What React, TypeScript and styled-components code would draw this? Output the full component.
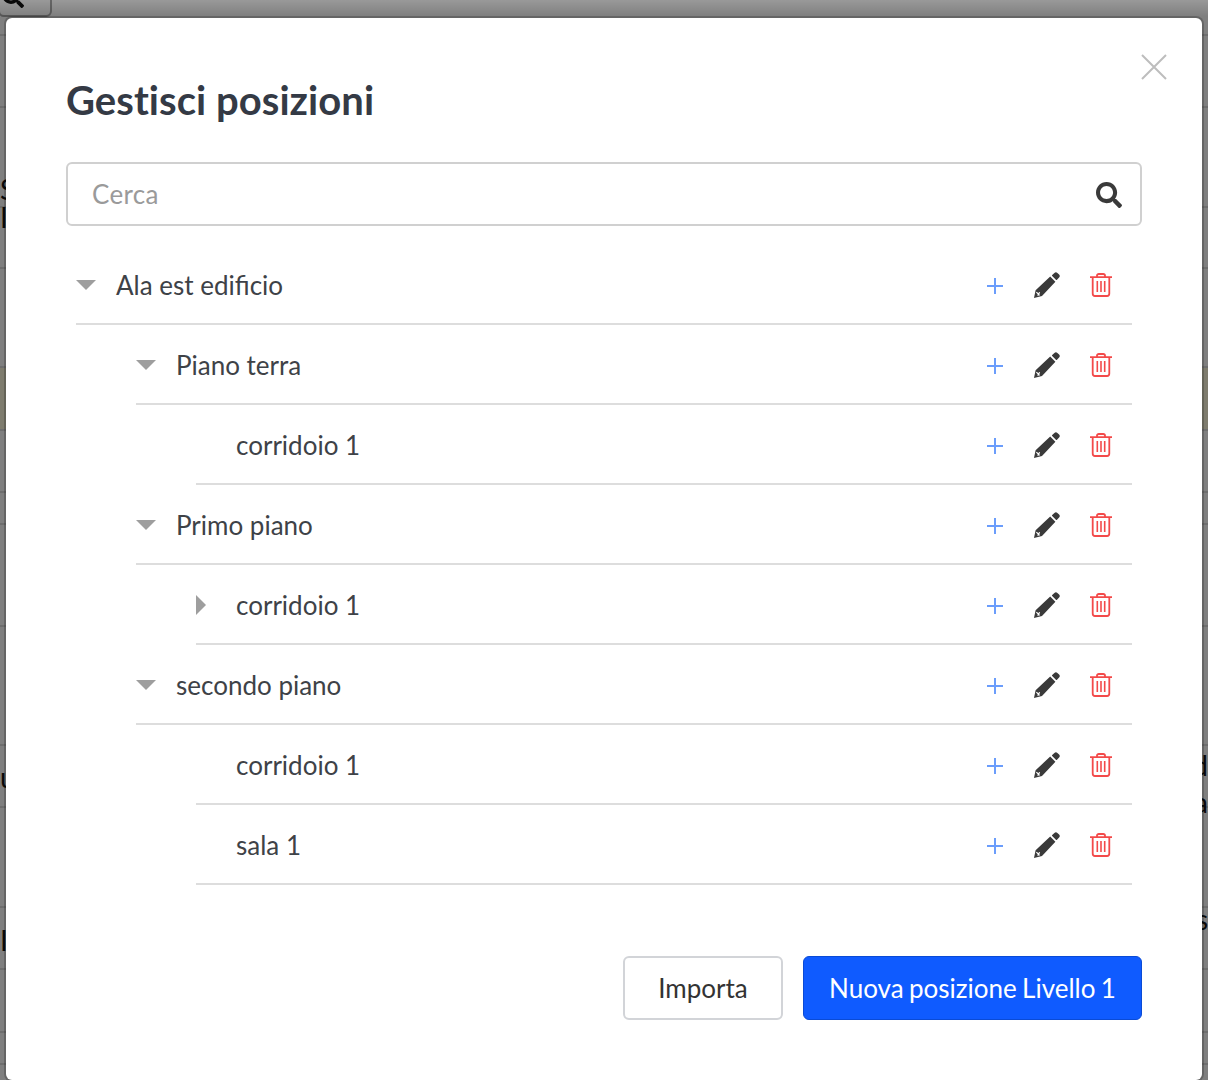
import styled, {createGlobalStyle} from 'styled-components';
import {FaSearch} from 'react-icons/fa';

const GlobalStyle = createGlobalStyle`
  html, body {
    margin: 0;
    height: 100%;
    overflow: hidden;
    font-family: Lato, "Liberation Sans", sans-serif;
  }
  * { box-sizing: border-box; }
`;

type TreeItem = {label: string; level: number; arrow?: 'down' | 'right'};

const items: TreeItem[] = [
  {label: 'Ala est edificio', level: 0, arrow: 'down'},
  {label: 'Piano terra', level: 1, arrow: 'down'},
  {label: 'corridoio 1', level: 2},
  {label: 'Primo piano', level: 1, arrow: 'down'},
  {label: 'corridoio 1', level: 2, arrow: 'right'},
  {label: 'secondo piano', level: 1, arrow: 'down'},
  {label: 'corridoio 1', level: 2},
  {label: 'sala 1', level: 2},
];

// the page that shows at the edges of the modal
const pageRows = [
  {height: 20},
  {height: 72},
  {height: 100, left: 'S', leftTop: 71},
  {height: 61, left: 'I', leftTop: -1},
  {height: 99},
  {height: 63, tint: true},
  {height: 62},
  {height: 32},
  {height: 102},
  {height: 119},
  {height: 62, left: 'u', leftTop: 21, right: 'd', rightTop: 9},
  {height: 100, right: 'a', rightTop: -16},
  {height: 62, left: 'I', leftTop: 22, right: 's', rightTop: 1},
  {height: 63},
  {height: 32},
  {height: 40},
];

const PencilIcon = () => (
  <svg width="26" height="26" viewBox="0 0 26 26">
    <path
      fill="#3a3a3a"
      d="M18.2 3 20.4.9a2.2 2.2 0 0 1 3 0l1.7 1.7a2.2 2.2 0 0 1 0 3L23 7.8a.8.8 0 0 1-1.1 0L18.2 4.1a.8.8 0 0 1 0-1.1zM16.2 4.6l5.2 5.2L8 24 0 26l1.6-7.8z"
    />
    <path fill="none" stroke="#fff" strokeWidth="1.2" d="M2.4 20.2 5.6 23.4M5.6 20.2 3.7 23.6" />
  </svg>
);

const TrashIcon = () => (
  <svg width="22" height="24" viewBox="0 0 22 24" fill="none" stroke="#f34a4a">
    <path strokeWidth="1.8" d="M0 4.2H22M7 4V2.6C7 1.5 7.8 1 8.8 1h4.4c1 0 1.8.5 1.8 1.6V4" />
    <path strokeWidth="1.8" d="M2.7 4.2V20.5C2.7 22 3.6 23 5 23H17c1.4 0 2.3-1 2.3-2.5V4.2" />
    <path strokeWidth="1.6" d="M7.3 8V19M11 8V19M14.7 8V19" />
  </svg>
);

const PlusSvg = styled.svg`
  margin: 2px 1px 0 0;
`;

const PlusIcon = () => (
  <PlusSvg width="16" height="16" viewBox="0 0 16 16" stroke="#6b9dfb" strokeWidth="2">
    <path d="M8 0V16M0 8H16" />
  </PlusSvg>
);

const CloseIcon = () => (
  <svg width="26" height="26" viewBox="0 0 26 26" stroke="#bdbdbd" strokeWidth="2">
    <path d="M1 1 25 25M25 1 1 25" />
  </svg>
);

const App = () => (
  <>
    <GlobalStyle />
    <PageBehind>
      <PageToolbar>
        <PageSearchButton>
          <FaSearch />
        </PageSearchButton>
      </PageToolbar>
      {pageRows.map((row, i) => (
        <PageRow key={i} $height={row.height} $tint={row.tint}>
          <PageText $top={row.leftTop ?? 0}>{row.left}</PageText>
          <PageText $top={row.rightTop ?? 0}>{row.right}</PageText>
        </PageRow>
      ))}
    </PageBehind>
    <Overlay>
      <Modal>
        <CloseButton>
          <CloseIcon />
        </CloseButton>
        <Title>Gestisci posizioni</Title>
        <SearchBox>
          <SearchInput placeholder="Cerca" />
          <SearchIcon />
        </SearchBox>
        <Tree>
          {items.map((item, i) => (
            <Row key={i} $level={item.level}>
              <Arrow>
                {item.arrow === 'down' && <ArrowDown />}
                {item.arrow === 'right' && <ArrowRight />}
              </Arrow>
              <Label>{item.label}</Label>
              <Actions>
                <PlusIcon />
                <PencilIcon />
                <TrashIcon />
              </Actions>
            </Row>
          ))}
        </Tree>
        <Footer>
          <SecondaryButton>Importa</SecondaryButton>
          <PrimaryButton>Nuova posizione Livello 1</PrimaryButton>
        </Footer>
      </Modal>
    </Overlay>
  </>
);

const PageBehind = styled.div`
  position: fixed;
  inset: 0;
  background: #fff;
  overflow: hidden;
`;
const PageToolbar = styled.div`
  height: 16px;
  background: #fff;
`;
const PageSearchButton = styled.div`
  position: relative;
  width: 54px;
  height: 17px;
  margin-left: -2px;
  overflow: hidden;
  border: 2px solid #aaa;
  border-top: 0;
  border-radius: 0 0 6px 6px;
  color: #111;
  svg {
    position: absolute;
    top: -14px;
    left: 2px;
    width: 22px;
    height: 22px;
  }
`;
const PageRow = styled.div<{$height: number; $tint?: boolean}>`
  height: ${props => props.$height}px;
  display: flex;
  justify-content: space-between;
  border-bottom: 2px solid #ddd;
  background: ${props => (props.$tint ? '#fdf8dc' : 'transparent')};
`;
const PageText = styled.span<{$top: number}>`
  margin-top: ${props => props.$top}px;
  height: 20px;
  font-size: 28px;
  line-height: 20px;
  color: #111;
`;
const Overlay = styled.div`
  position: fixed;
  inset: 0;
  padding: 18px 6px 0;
  background: linear-gradient(rgba(0, 0, 0, 0.4), rgba(0, 0, 0, 0.5) 16px);
`;
const Modal = styled.div`
  position: relative;
  height: 1062px;
  padding: 59px 60px 0;
  background: #fff;
  border-radius: 6px;
  box-shadow: 0 0 0 2px rgba(0, 0, 0, 0.2);
`;
const CloseButton = styled.div`
  position: absolute;
  top: 36px;
  right: 35px;
  width: 26px;
  height: 26px;
`;
const Title = styled.h2`
  margin: 0;
  height: 46px;
  font-size: 40px;
  line-height: 46px;
  font-weight: 700;
  font-variant-ligatures: none;
  letter-spacing: 0.05px;
  color: #343a45;
`;
const SearchBox = styled.div`
  position: relative;
  height: 64px;
  margin-top: 39px;
  margin-bottom: 19px;
`;
const SearchInput = styled.input`
  width: 100%;
  height: 100%;
  padding: 0 60px 0 24px;
  border: 2px solid #d0d0d0;
  border-radius: 6px;
  outline: none;
  font-family: Lato, sans-serif;
  font-size: 26px;
  letter-spacing: 0.3px;
  color: #3c3c3c;
  &::placeholder {
    color: #9a9a9a;
    opacity: 1;
  }
`;
const SearchIcon = styled(FaSearch)`
  position: absolute;
  right: 20px;
  top: 20px;
  width: 26px;
  height: 26px;
  color: #3a3a3a;
`;
const Tree = styled.div`
  margin: 0 10px;
`;
const Row = styled.div<{$level: number}>`
  display: flex;
  align-items: center;
  height: 80px;
  padding-top: 2px;
  margin-left: ${props => props.$level * 60}px;
  border-bottom: 2px solid #ddd;
`;
const Arrow = styled.div`
  width: 40px;
  display: flex;
  align-items: center;
`;
const ArrowDown = styled.div`
  width: 0;
  height: 0;
  border-left: 10px solid transparent;
  border-right: 10px solid transparent;
  border-top: 10px solid #9e9e9e;
`;
const ArrowRight = styled.div`
  width: 0;
  height: 0;
  border-top: 10px solid transparent;
  border-bottom: 10px solid transparent;
  border-left: 10px solid #9e9e9e;
`;
const Label = styled.div`
  flex: 1;
  font-size: 26px;
  color: #3e4247;
`;
const Actions = styled.div`
  display: flex;
  align-items: center;
  gap: 30px;
  padding-right: 20px;
`;
const Footer = styled.div`
  display: flex;
  justify-content: flex-end;
  gap: 20px;
  margin-top: 71px;
`;
const BaseButton = styled.div`
  height: 64px;
  display: flex;
  align-items: center;
  justify-content: center;
  border-radius: 6px;
  font-size: 26px;
`;
const SecondaryButton = styled(BaseButton)`
  width: 160px;
  background: #fff;
  border: 2px solid #d2d4d8;
  color: #333;
`;
const PrimaryButton = styled(BaseButton)`
  width: 339px;
  background: #0f5bff;
  border: 1px solid #0a4bd6;
  color: #fff;
  word-spacing: -1.3px;
`;

export default App;
